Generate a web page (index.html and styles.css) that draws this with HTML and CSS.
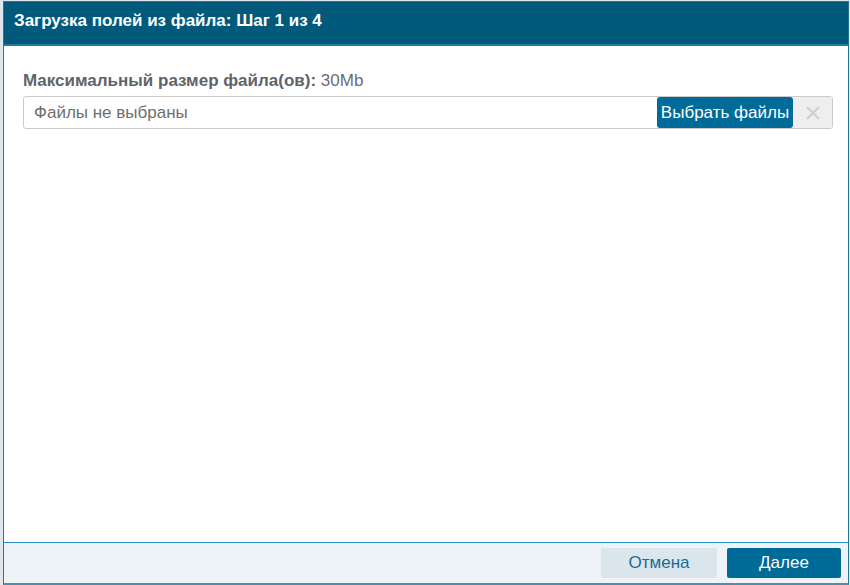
FILE: index.html
```html
<!DOCTYPE html>
<html lang="ru">
<head>
    <meta charset="UTF-8">
    <title>Загрузка полей из файла</title>
    <link rel="stylesheet" href="styles.css">
</head>
<body>
    <div class="dialog">
        <div class="dialog-header">Загрузка полей из файла: Шаг 1 из 4</div>

        <div class="dialog-body">
            <div class="limit"><b>Максимальный размер файла(ов):</b> 30Mb</div>
            <div class="file-input">
                <span class="file-caption">Файлы не выбраны</span>
                <span class="btn-browse">Выбрать файлы</span>
                <span class="btn-clear">
                    <svg width="16" height="16" viewBox="0 0 16 16">
                        <path d="M2 2 L14 14 M14 2 L2 14" stroke="#cfcfcf" stroke-width="2.2" fill="none"/>
                    </svg>
                </span>
            </div>
        </div>

        <div class="dialog-footer">
            <button class="btn btn-cancel">Отмена</button>
            <button class="btn btn-next">Далее</button>
        </div>
    </div>
</body>
</html>
```

FILE: styles.css
```css
html, body {
    margin: 0;
    height: 100%;
}
body {
    font-family: "Liberation Sans", Arial, sans-serif;
    background: #dfe6ec;
    padding: 1px 1px 0 3px;
    box-sizing: border-box;
}
.dialog {
    height: 100%;
    box-sizing: border-box;
    background: #fff;
    border: 1px solid #1f78a6;
    border-bottom: 2px solid #4d8fb1;
    display: flex;
    flex-direction: column;
}
.dialog-header {
    background: #015a7c;
    color: #fff;
    font-weight: bold;
    font-size: 17px;
    height: 42px;
    line-height: 38px;
    padding-left: 10px;
    border-bottom: 2px solid #1c7ba6;
}
.dialog-body {
    flex: 1;
    padding: 25px 15px 0 19px;
}
.limit {
    color: #6a6f75;
    font-size: 17px;
    line-height: 19px;
    margin-bottom: 6px;
}
.limit b {
    color: #5f646b;
}
.file-input {
    display: flex;
    align-items: stretch;
    height: 33px;
    box-sizing: border-box;
    border: 1px solid #cbcbcb;
    border-radius: 3px;
}
.file-caption {
    flex: 1;
    color: #6f6f6f;
    font-size: 17px;
    line-height: 31px;
    padding-left: 10px;
}
.btn-browse {
    background: #006b99;
    color: #fff;
    font-size: 17px;
    line-height: 31px;
    border-radius: 3px;
    width: 136px;
    text-align: center;
}
.btn-clear {
    width: 39px;
    background: #eeeeee;
    display: flex;
    align-items: center;
    justify-content: center;
}
.dialog-footer {
    height: 40px;
    background: #eef3f7;
    border-top: 1px solid #2a8dc2;
    display: flex;
    justify-content: flex-end;
    align-items: center;
    gap: 10px;
    padding-right: 7px;
}
.btn {
    font-family: inherit;
    font-size: 17px;
    border: 0;
    border-radius: 2px;
    height: 30px;
    cursor: pointer;
}
.btn-cancel {
    width: 116px;
    background: #dae5ec;
    color: #1c6b94;
}
.btn-next {
    width: 114px;
    background: #006b99;
    color: #fff;
}
```
